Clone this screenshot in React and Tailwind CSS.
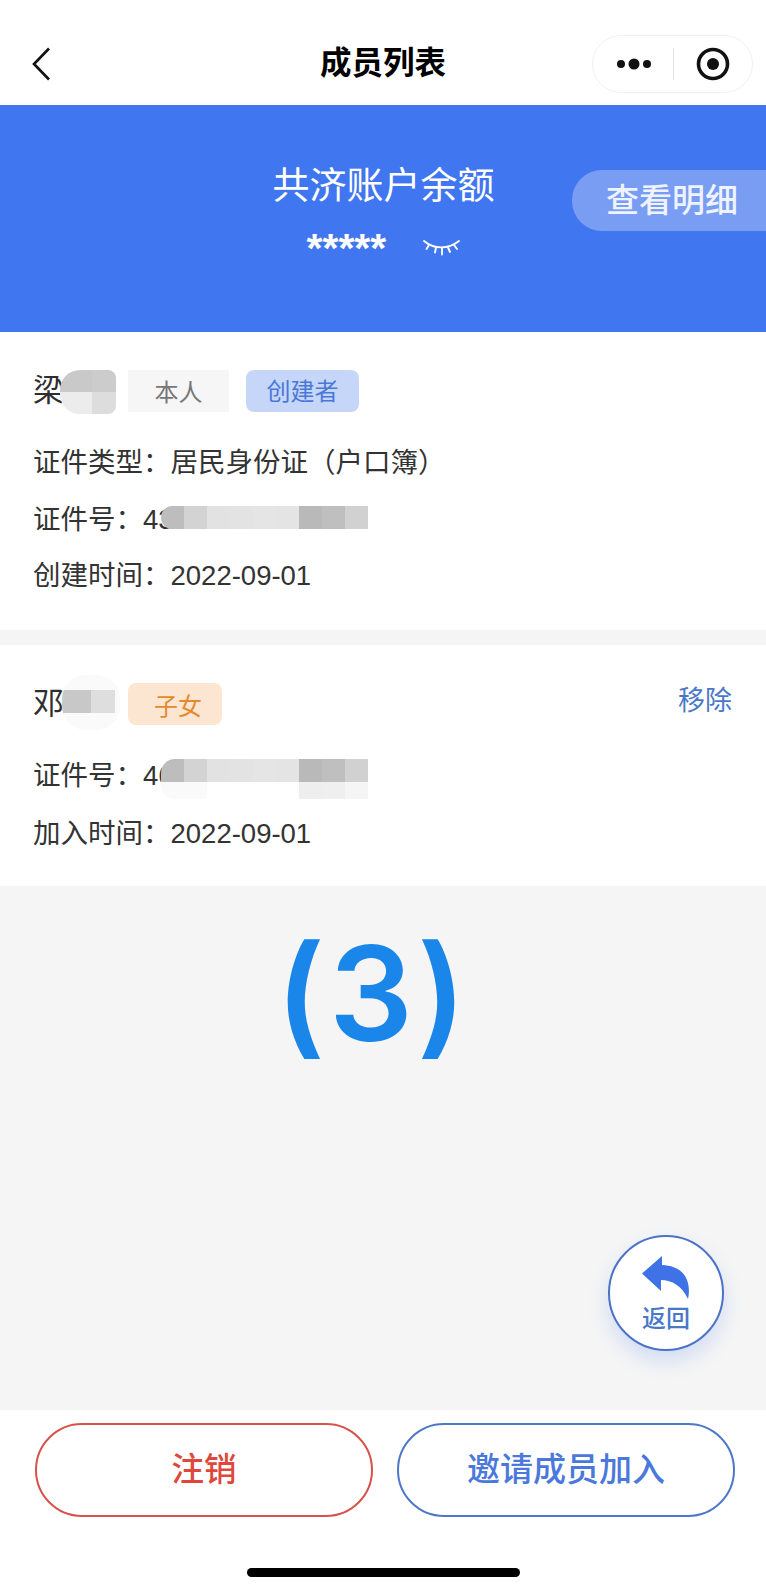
const cjk = 'font-["Liberation_Sans","Noto_Sans_CJK_SC",sans-serif]'

// mosaic cells that hide part of a member's details
const idCellsTop = ['bg-[#bdbdbd]', 'bg-[#d3d3d3]', 'bg-[#e2e2e2]', 'bg-[#e3e3e3]', 'bg-[#e5e5e5]', 'bg-[#e4e4e4]', 'bg-[#b9b9b9]', 'bg-[#bfbfbf]', 'bg-[#d1d1d1]']
const idCellsLow = ['bg-[#fafafa]', 'bg-[#fafafa]', 'bg-white', 'bg-white', 'bg-white', 'bg-white', 'bg-[#eeeeee]', 'bg-[#efefef]', 'bg-[#f5f5f5]']

function IdMosaic({ withLowRow }) {
  return (
    <div className="absolute left-[128px] top-[-1px] w-[207px] overflow-hidden rounded-l-[14px]">
      <div className="flex h-[23px]">
        {idCellsTop.map((c, i) => <div key={i} className={`h-full w-[23px] ${c}`} />)}
      </div>
      {withLowRow && (
        <div className="flex h-[17px]">
          {idCellsLow.map((c, i) => <div key={i} className={`h-full w-[23px] ${c}`} />)}
        </div>
      )}
    </div>
  )
}

function Tag({ className, children }) {
  return (
    <span className={`flex h-[42px] items-center justify-center text-[24px] ${className}`}>{children}</span>
  )
}

function InfoLine({ label, value, height, children }) {
  return (
    <div className={`relative whitespace-nowrap text-[27.5px] text-[#333333] ${height}`}>
      {label}：{value}
      {children}
    </div>
  )
}

export default function App() {
  return (
    <div className={`flex h-[1590px] w-[766px] flex-col overflow-hidden bg-[#f5f5f5] ${cjk}`}>
      {/* nav bar */}
      <header className="grid h-[105px] grid-cols-[1fr_auto_1fr] items-center bg-white pt-[35px] pb-[12px]">
        <div className="pl-[31px]">
          <svg width="20" height="34" viewBox="0 0 20 34" fill="none" stroke="#111" strokeWidth="2.6">
            <path d="M18 1.500 3 17l15 15.500" />
          </svg>
        </div>
        <h1 className="text-[31.5px] leading-none font-bold text-black">成员列表</h1>
        <div className="flex justify-end pr-[13px]">
          <div className="flex h-[58px] w-[161px] items-center rounded-full border border-[#f1f1f1] bg-white">
            <svg className="ml-[23px]" width="36" height="14" viewBox="0 0 36 14" fill="#111">
              <circle cx="5" cy="7" r="4" />
              <circle cx="18" cy="7" r="5.5" />
              <circle cx="31" cy="7" r="4" />
            </svg>
            <div className="ml-[21px] h-[32px] w-px bg-[#e2e2e2]" />
            <svg className="ml-[22px]" width="34" height="34" viewBox="0 0 34 34" fill="none">
              <circle cx="17" cy="17" r="14.5" stroke="#111" strokeWidth="3.6" />
              <circle cx="17" cy="17" r="6" fill="#111" />
            </svg>
          </div>
        </div>
      </header>

      {/* balance banner */}
      <section className="relative flex h-[227px] flex-col items-center bg-[#4176f1] pt-[55px] text-white">
        <div className="h-[54px] pl-[1px] text-[37px] leading-[54px]">共济账户余额</div>
        <div className="flex h-[44px] items-start">
          <span className='mt-[8.5px] h-[34px] w-[82px] font-["Liberation_Sans",sans-serif] text-[41px] leading-[50px] font-bold'>*****</span>
          <svg className="mt-[25px] ml-[34px]" width="37" height="17" viewBox="0 0 37 17" fill="none" stroke="white" strokeWidth="1.9" strokeLinecap="round">
            <path d="M1 2c10 8.500 24 8.500 35 0" />
            <path d="M6 6 3.500 10M13 8.500 12 13.500M19 9v6.500M25 8.500 27 13M31 6l3 4" />
          </svg>
        </div>
        <div className="absolute top-[65px] right-0 flex h-[61px] w-[194px] items-center rounded-l-[30px] bg-[#7a9df4] pl-[34px] text-[33px] font-medium text-[#eef3fe]">
          查看明细
        </div>
      </section>

      {/* creator */}
      <section className="bg-white px-[33px] pt-[38px] pb-[25px]">
        <div className="relative mb-[23px] flex h-[42px] items-center">
          <span className="w-[95px] text-[31px] text-[#2e2e2e]">梁</span>
          <Tag className="w-[101px] bg-[#f6f6f6] pt-[3px] text-[#777777]">本人</Tag>
          <Tag className="ml-[17px] w-[113px] rounded-[8px] bg-[#c6d6f9] pt-[1px] text-[#4a78d8]">创建者</Tag>
          <div className="absolute top-0 left-[27px] grid h-[44px] w-[56px] grid-cols-[32px_24px] grid-rows-2 overflow-hidden rounded-l-[20px] rounded-r-[8px]">
            <div className="bg-[#c9c9c9]" />
            <div className="bg-[#cccccc]" />
            <div className="bg-[#ececec]" />
            <div className="bg-[#dddddd]" />
          </div>
        </div>
        <InfoLine label="证件类型" value="居民身份证（户口簿）" height="h-[56.5px] leading-[56.5px]" />
        <InfoLine label="证件号" value="43" height="h-[56.5px] leading-[56.5px]">
          <div className="absolute top-[15px] left-0 w-full"><IdMosaic /></div>
        </InfoLine>
        <InfoLine label="创建时间" value="2022-09-01" height="h-[56.5px] leading-[56.5px]" />
      </section>

      {/* dependant */}
      <section className="mt-[15px] bg-white px-[33px] pt-[38px] pb-[23px]">
        <div className="relative mb-[22px] flex h-[42px] items-center">
          <span className="w-[95px] pt-[2px] text-[31px] text-[#2e2e2e]">邓</span>
          <Tag className="w-[94px] rounded-[8px] bg-[#fde6d1] pt-[6px] pl-[6px] text-[#e48a2e]">子女</Tag>
          <span className="ml-auto pr-[1px] pb-[4px] text-[27px] text-[#4a78c8]">移除</span>
          <div className="absolute top-[-8px] left-[29px] h-[55px] w-[58px] overflow-hidden rounded-[24px] bg-[#fafafa]">
            <div className="mt-[15px] flex h-[23px]">
              <div className="w-[29px] bg-[#c8c8c8]" />
              <div className="w-[24px] bg-[#dedede]" />
            </div>
          </div>
        </div>
        <InfoLine label="证件号" value="46" height="h-[58px] leading-[58px]">
          <div className="absolute top-[13px] left-0 w-full"><IdMosaic withLowRow /></div>
        </InfoLine>
        <InfoLine label="加入时间" value="2022-09-01" height="h-[58px] leading-[58px]" />
      </section>

      {/* page area */}
      <main className="flex flex-1 flex-col">
        <div className='flex justify-center pt-[27px] pr-[20px] font-["Inter",sans-serif] text-[132px] leading-[160px] font-semibold tracking-[4px] text-[#1b86e9]'>
          (3)
        </div>
        <button className="mt-auto mr-[42px] mb-[59px] flex h-[116px] w-[116px] flex-col items-center self-end rounded-full border-2 border-[#4a72c8] bg-white pt-[19px] shadow-[0_10px_20px_rgba(65,118,241,0.2)]">
          <svg width="48" height="44" viewBox="0 0 48 44" fill="#3f72e6">
            <path d="M20 0 0 17.500 19 35V24c11 0 21 6 27 19 3-13 0-33-26-34z" />
          </svg>
          <span className="mt-[5px] text-[24px] leading-[28px] font-medium text-[#4a78c8]">返回</span>
        </button>
      </main>

      {/* bottom actions */}
      <footer className="flex h-[180px] flex-col bg-white pt-[13px]">
        <div className="grid grid-cols-2 gap-[24px] pr-[31px] pl-[35px]">
          <button className="flex h-[94px] items-center justify-center rounded-full border-2 border-[#d6524a] text-[32.500px] font-medium text-[#e0463b]">注销</button>
          <button className="flex h-[94px] items-center justify-center rounded-full border-2 border-[#4d78c8] text-[33px] font-medium text-[#4a78dc]">邀请成员加入</button>
        </div>
        <div className="mx-auto mt-[51px] h-[9px] w-[273px] rounded-full bg-black" />
      </footer>
    </div>
  )
}
